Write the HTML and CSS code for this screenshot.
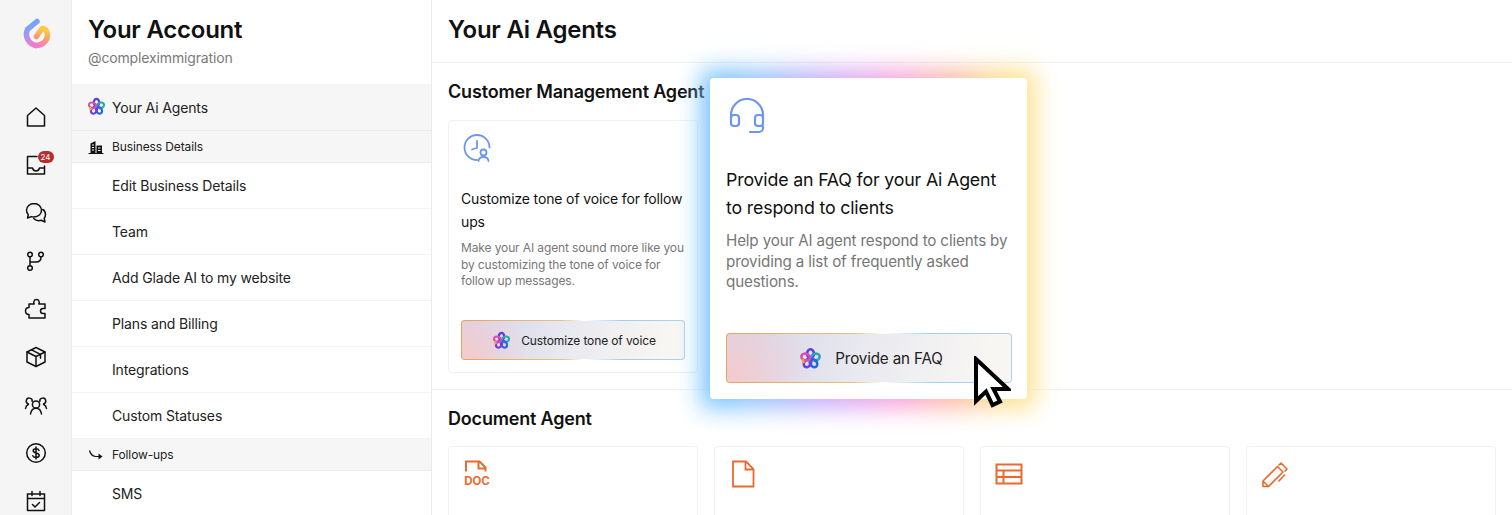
FILE: index.html
```html
<!DOCTYPE html>
<html lang="en">
<head>
    <meta charset="UTF-8">
    <title>Your Ai Agents</title>
    <link rel="stylesheet" href="styles.css">
</head>
<body>
    <svg class="defs" width="0" height="0">
        <defs>
            <linearGradient id="logoLeft" x1="0" y1="0" x2="0.3" y2="1">
                <stop offset="0" stop-color="#4db2f7"/>
                <stop offset="0.55" stop-color="#a596f5"/>
                <stop offset="1" stop-color="#f27ccc"/>
            </linearGradient>
            <linearGradient id="logoRight" x1="0.2" y1="1" x2="0.4" y2="0">
                <stop offset="0" stop-color="#f27ccc"/>
                <stop offset="0.45" stop-color="#fa9a70"/>
                <stop offset="1" stop-color="#f8cc48"/>
            </linearGradient>
            <symbol id="flower" viewBox="0 0 20 20">
                <g fill="none" stroke-width="2.3">
                    <ellipse cx="10" cy="5.8" rx="2.9" ry="3.8" stroke="#5a3fd8"/>
                    <ellipse cx="14.2" cy="8.8" rx="2.9" ry="3.8" stroke="#2aa5b8" transform="rotate(72 14.2 8.8)"/>
                    <ellipse cx="12.6" cy="14" rx="2.9" ry="3.8" stroke="#2468e0" transform="rotate(144 12.6 14)"/>
                    <ellipse cx="7.4" cy="14" rx="2.9" ry="3.8" stroke="#6d3fe0" transform="rotate(216 7.4 14)"/>
                    <ellipse cx="5.8" cy="8.8" rx="2.9" ry="3.8" stroke="#d94fb0" transform="rotate(288 5.8 8.8)"/>
                    <path d="M3.2 10.5 4 14" stroke="#f2a33c"/>
                </g>
            </symbol>
        </defs>
    </svg>

    <div class="app">
        <aside class="rail">
            <svg class="logo" width="30" height="34" viewBox="0 0 30 34" fill="none" stroke-linecap="round" stroke-width="5.5">
                <path d="M15 28.5C22 28.5 26.500 23.500 26.500 18C26.500 14 24 11 21.500 11.500C20 12 18 16 15.500 19.500" stroke="url(#logoRight)"/>
                <path d="M16 4.500 6.500 12.500A11.500 11.500 0 0 0 15 28.5" stroke="url(#logoLeft)"/>
            </svg>
            <nav class="rail-nav">
                <a class="rail-item"><svg class="rail-icon" viewBox="0 0 24 24"><path d="M3.5 21V10.5L12 3l8.5 7.5V21Z"/></svg></a>
                <a class="rail-item">
                    <svg class="rail-icon" viewBox="0 0 24 24"><path d="M13 3.5H3.5V21h17v-8M3.5 15h5c.5 2 1.700 3 3.500 3s3-1 3.500-3h5"/></svg>
                    <span class="badge">24</span>
                </a>
                <a class="rail-item"><svg class="rail-icon" viewBox="0 0 24 24"><path d="M10 2.500c-4.300 0-7.500 3-7.500 6.800 0 1.700.7 3.200 1.800 4.400L3.500 17l3.800-1.400c.8.3 1.700.4 2.700.4 4.300 0 7.500-3 7.500-6.700S14.300 2.500 10 2.500Z"/><path d="M18.800 8.500c1.700 1.100 2.700 3 2.700 5 0 1.400-.5 2.700-1.300 3.700l.8 3.800-3.800-1.700c-.8.3-1.500.4-2.400.4-2 0-3.800-.8-5-2.100"/></svg></a>
                <a class="rail-item"><svg class="rail-icon" viewBox="0 0 24 24"><circle cx="6" cy="5.5" r="2.3"/><circle cx="17" cy="5.5" r="2.3"/><circle cx="6" cy="19" r="2.3"/><path d="M6 8v8.500M17 8c0 3.500-2 5-5 5H6"/></svg></a>
                <a class="rail-item"><svg class="rail-icon" viewBox="0 0 24 24"><path d="M5 21H21V16.500H19a2.500 2.500 0 0 1 0-5h2V7h-6.200c.8-1 .7-4.500-2.300-4.500S9.400 6 10.200 7H5v3.500c-2 0-3.500 1.500-3.500 3.500S3 17.500 5 17.500Z"/></svg></a>
                <a class="rail-item"><svg class="rail-icon" viewBox="0 0 24 24"><path d="M12 2.500 21 7v10l-9 4.500L3 17V7Z"/><path d="M3 7l9 4.500L21 7M12 11.500v10M7.500 4.800l9 4.500v4"/></svg></a>
                <a class="rail-item"><svg class="rail-icon" viewBox="0 0 24 24"><circle cx="12" cy="11.500" r="3.600"/><path d="M6.500 21c.5-3 2.500-5.800 5.500-5.800s5 2.800 5.500 5.800M8.200 8.500A3 3 0 1 0 4.500 11M1.500 15.500c.2-2 1.300-3.500 3-4.300M15.800 8.500A3 3 0 1 1 19.500 11M22.500 15.500c-.2-2-1.300-3.500-3-4.300"/></svg></a>
                <a class="rail-item"><svg class="rail-icon" viewBox="0 0 24 24"><circle cx="12" cy="12" r="9.300"/><path d="M15 9.500c-.4-1.200-1.600-1.800-3-1.800-1.700 0-2.800.8-2.800 2 0 3 6 1.500 6 4.600 0 1.300-1.300 2.200-3.200 2.200-1.500 0-2.700-.7-3.200-1.800M12 6v12"/></svg></a>
                <a class="rail-item"><svg class="rail-icon" viewBox="0 0 24 24"><path d="M3.500 5H20.500V21.500H3.500ZM3.500 9.500H20.500M8 2.500v4M16 2.500v4M8.500 15.500l2.500 2.500 4.500-4.500"/></svg></a>
            </nav>
        </aside>

        <aside class="sidebar">
            <div class="sidebar-head">
                <h1 class="sidebar-title">Your Account</h1>
                <p class="sidebar-handle">@compleximmigration</p>
            </div>
            <a class="menu-row menu-active"><svg class="menu-flower"><use href="#flower"/></svg>Your Ai Agents</a>
            <div class="menu-section">
                <svg class="menu-icon" viewBox="0 0 16 16"><path d="M.5 14.500h15" stroke="#111" stroke-width="1" fill="none"/><path d="M2.500 14V4.500l5-2.500V14ZM8.500 14V6.500H14V14Z" fill="#111"/><path d="M4 6h2M4 8.500h2M4 11h2M10 9h2.500M10 11.500h2.500" stroke="#fff" stroke-width="1"/></svg>
                Business Details
            </div>
            <a class="menu-row">Edit Business Details</a>
            <a class="menu-row">Team</a>
            <a class="menu-row">Add Glade AI to my website</a>
            <a class="menu-row">Plans and Billing</a>
            <a class="menu-row">Integrations</a>
            <a class="menu-row">Custom Statuses</a>
            <div class="menu-section">
                <svg class="menu-icon" viewBox="0 0 16 16"><path d="M1.500 3.500c.8 3.500 2.800 5.500 6 6h6" stroke="#111" stroke-width="1.200" fill="none"/><path d="M10.500 6.500 14.500 9.500l-4 3Z" fill="#111"/></svg>
                Follow-ups
            </div>
            <a class="menu-row">SMS</a>
        </aside>

        <main class="main">
            <header class="main-head"><h1 class="main-title">Your Ai Agents</h1></header>

            <section class="agent-section">
                <h2 class="agent-title">Customer Management Agent</h2>
                <div class="card-grid">
                    <div class="card">
                        <svg class="card-icon" viewBox="0 0 28 28" fill="none" stroke="#6d96ef" stroke-width="1.800" stroke-linecap="round" stroke-linejoin="round">
                            <path d="M14 26A12.500 12.500 0 1 1 26.500 13.500M14 7v7l-5 1.500"/>
                            <circle cx="20.500" cy="18.500" r="3"/>
                            <path d="M15.500 27c.3-2.500 2.300-4 5-4s4.700 1.500 5 4"/>
                        </svg>
                        <h3 class="card-title">Customize tone of voice for follow ups</h3>
                        <p class="card-text">Make your AI agent sound more like you by customizing the tone of voice for follow up messages.</p>
                        <a class="agent-btn"><svg class="btn-flower"><use href="#flower"/></svg>Customize tone of voice</a>
                    </div>
                </div>
            </section>

            <section class="agent-section">
                <h2 class="agent-title">Document Agent</h2>
                <div class="card-grid doc-grid">
                    <div class="card">
                        <svg class="doc-icon" viewBox="0 0 28 28" fill="none" stroke="#ea6a2e" stroke-width="2">
                            <path d="M3 11.500V1.500h13.500l6 6v4M15.500 1.500v7h7"/>
                            <text class="doc-label" x="14" y="24.500" text-anchor="middle">DOC</text>
                        </svg>
                    </div>
                    <div class="card">
                        <svg class="doc-icon" viewBox="0 0 28 28" fill="none" stroke="#ea6a2e" stroke-width="1.800"><path d="M4 1.500H17L24.500 9V26.500H4ZM16.500 1.500V9.500H24.500"/></svg>
                    </div>
                    <div class="card">
                        <svg class="doc-icon" viewBox="0 0 28 28" fill="none" stroke="#ea6a2e" stroke-width="2"><path d="M1.500 4.500H26.500V23.500H1.500ZM1.500 10.500H26.500M1.500 17H26.500M8.500 10.500V23.500"/></svg>
                    </div>
                    <div class="card">
                        <svg class="doc-icon" viewBox="0 0 28 28" fill="none" stroke="#ea6a2e" stroke-width="1.600" stroke-linejoin="round"><path d="M2 26.500V21L16.500 6.500 22 12 7.500 26.500ZM2 21 7.500 26.500M17.500 5.500 20 3l6 6-2.500 2.500M24 14.500 17.500 21.500"/></svg>
                    </div>
                </div>
            </section>

            <!-- one hovered card, drawn larger and on top -->
            <div class="pop-glow"></div>
            <div class="pop-card">
                <svg class="pop-icon" viewBox="0 0 36 36" fill="none" stroke="#6d96ef" stroke-width="2.200" stroke-linecap="round" stroke-linejoin="round">
                    <path d="M2 19V17a16 16 0 0 1 32 0v2"/>
                    <rect x="2" y="17" width="8" height="11" rx="3"/>
                    <rect x="26" y="17" width="8" height="11" rx="3"/>
                    <path d="M34 28v2a4 4 0 0 1-4 4h-9"/>
                </svg>
                <h3 class="pop-title">Provide an FAQ for your Ai Agent to respond to clients</h3>
                <p class="pop-text">Help your AI agent respond to clients by providing a list of frequently asked questions.</p>
                <a class="agent-btn pop-btn"><svg class="pop-flower"><use href="#flower"/></svg>Provide an FAQ</a>
            </div>
            <svg class="cursor" width="38" height="54" viewBox="0 0 38 54"><path d="M3 3V45L13 35.500 19.500 49 27 45.500 20.500 33H35Z" fill="#fff" stroke="#000" stroke-width="4"/></svg>
        </main>
    </div>
</body>
</html>
```

FILE: styles.css
```css
* {
    box-sizing: border-box;
    letter-spacing: -0.01em;
}

body {
    margin: 0;
    height: 515px;
    overflow: hidden;
    background-color: #fff;
    color: #111;
    font-family: Inter, "Liberation Sans", sans-serif;
}

h1, h2, h3, p {
    margin: 0;
}

.defs {
    display: block;
    height: 0;
}

.app {
    display: flex;
    height: 515px;
    overflow: hidden;
}

/* left icon bar */
.rail {
    flex: 0 0 72px;
    display: flex;
    flex-direction: column;
    align-items: center;
    background-color: #f5f5f5;
    border-right: 1px solid #ebebeb;
}

.logo {
    flex: none;
    margin-top: 17px;
}

.rail-nav {
    display: flex;
    flex-direction: column;
    margin-top: 42px;
}

.rail-item {
    position: relative;
    display: flex;
    align-items: center;
    justify-content: center;
    flex: none;
    width: 48px;
    height: 48px;
}

.rail-icon {
    width: 24px;
    height: 24px;
    fill: none;
    stroke: #111;
    stroke-width: 1.5;
    stroke-linejoin: round;
    stroke-linecap: round;
}

.badge {
    position: absolute;
    top: 10px;
    left: 26px;
    width: 16px;
    height: 12px;
    border-radius: 6px;
    background-color: #b92c2c;
    color: #fff;
    font-size: 8px;
    line-height: 12px;
    text-align: center;
}

/* account menu */
.sidebar {
    flex: 0 0 360px;
    border-right: 1px solid #ebebeb;
}

.sidebar-head {
    height: 84px;
    padding: 14px 16px 0;
}

.sidebar-title {
    font-size: 24px;
    line-height: 32px;
    font-weight: 600;
}

.sidebar-handle {
    margin-top: 2px;
    font-size: 14px;
    line-height: 20px;
    color: #7a7a7a;
}

.menu-row {
    display: flex;
    align-items: center;
    height: 46px;
    padding-left: 40px;
    border-bottom: 1px solid #f3f3f3;
    font-size: 14px;
    color: #222;
}

.menu-active {
    position: relative;
    height: 47px;
    background-color: #f6f6f6;
    border-bottom-color: #ececec;
}

.menu-flower {
    position: absolute;
    left: 15px;
    top: 13px;
    width: 19px;
    height: 19px;
}

.menu-section {
    display: flex;
    align-items: center;
    height: 32px;
    padding-left: 16px;
    background-color: #f6f6f6;
    border-bottom: 1px solid #ececec;
    font-size: 12px;
    color: #222;
}

.menu-icon {
    flex: none;
    width: 16px;
    height: 16px;
    margin-right: 8px;
}

/* agents area */
.main {
    position: relative;
    flex: 1;
    min-width: 0;
}

.main-head {
    height: 63px;
    padding: 14px 16px 0;
    border-bottom: 1px solid #f1f1f1;
}

.main-title {
    font-size: 24px;
    line-height: 32px;
    font-weight: 600;
}

.agent-section {
    padding: 17px 16px 16px;
    border-bottom: 1px solid #f1f1f1;
}

.agent-title {
    font-size: 18px;
    line-height: 24px;
    font-weight: 600;
}

.card-grid {
    display: flex;
    gap: 16px;
    margin-top: 16px;
}

.doc-grid {
    margin-top: 15px;
}

.card {
    display: flex;
    flex-direction: column;
    flex: 0 0 250px;
    height: 253px;
    padding: 13px 12px 12px;
    border: 1px solid #f1f1f1;
    border-radius: 4px;
}

.card-icon {
    flex: none;
    width: 28px;
    height: 28px;
    margin-left: 2px;
}

.card-title {
    margin-top: 26px;
    font-size: 14px;
    line-height: 22.5px;
    font-weight: 400;
}

.card-text {
    margin-top: 7px;
    font-size: 12px;
    line-height: 16.5px;
    color: #777;
}

.agent-btn {
    display: flex;
    align-items: center;
    justify-content: center;
    margin-top: auto;
    height: 40px;
    padding-left: 2px;
    border: 1px solid transparent;
    border-radius: 4px;
    background:
        radial-gradient(circle at 0 100%, rgba(250, 200, 200, 0.9), rgba(250, 205, 205, 0) 30%) padding-box,
        linear-gradient(105deg, #d6d6ea 5%, #e8e8ef 45%, #f8f6f3 90%) padding-box,
        linear-gradient(90deg, #e2a45e, #e8c084 45%, #fff 55%, #9fd0ee 72%, #a9d6ee) border-box;
    font-size: 12px;
    color: #222;
}

.btn-flower {
    width: 19px;
    height: 19px;
    margin-right: 10px;
}

.doc-icon {
    display: block;
    width: 28px;
    height: 28px;
    margin-left: 2px;
}

.doc-label {
    fill: #ea6a2e;
    stroke: none;
    font-size: 11.5px;
    font-weight: 700;
}

/* hovered card */
.pop-glow {
    position: absolute;
    left: 270px;
    top: 70px;
    width: 333px;
    height: 338px;
    background: linear-gradient(90deg, #6cc0ff 0%, #8cc4ff 15%, #c9a8fb 38%, #f7a0e0 58%, #ffb8a0 76%, #fde08c 90%, #fde08c 100%);
    filter: blur(12px);
}

.pop-card {
    position: absolute;
    left: 278px;
    top: 78px;
    display: flex;
    flex-direction: column;
    width: 317px;
    height: 321px;
    padding: 16px 15px 16px 16px;
    background-color: #fff;
    border-radius: 4px;
}

.pop-icon {
    flex: none;
    width: 36px;
    height: 36px;
    margin-left: 3px;
    margin-top: 4px;
}

.pop-title {
    margin-top: 32px;
    font-size: 17.8px;
    line-height: 28px;
    font-weight: 400;
}

.pop-text {
    margin-top: 9px;
    font-size: 15.2px;
    line-height: 20.5px;
    color: #777;
}

.pop-btn {
    height: 50px;
    padding-left: 4px;
    font-size: 15.2px;
}

.pop-flower {
    width: 23px;
    height: 23px;
    margin-right: 13px;
}

.cursor {
    position: absolute;
    left: 541px;
    top: 356px;
}
```
